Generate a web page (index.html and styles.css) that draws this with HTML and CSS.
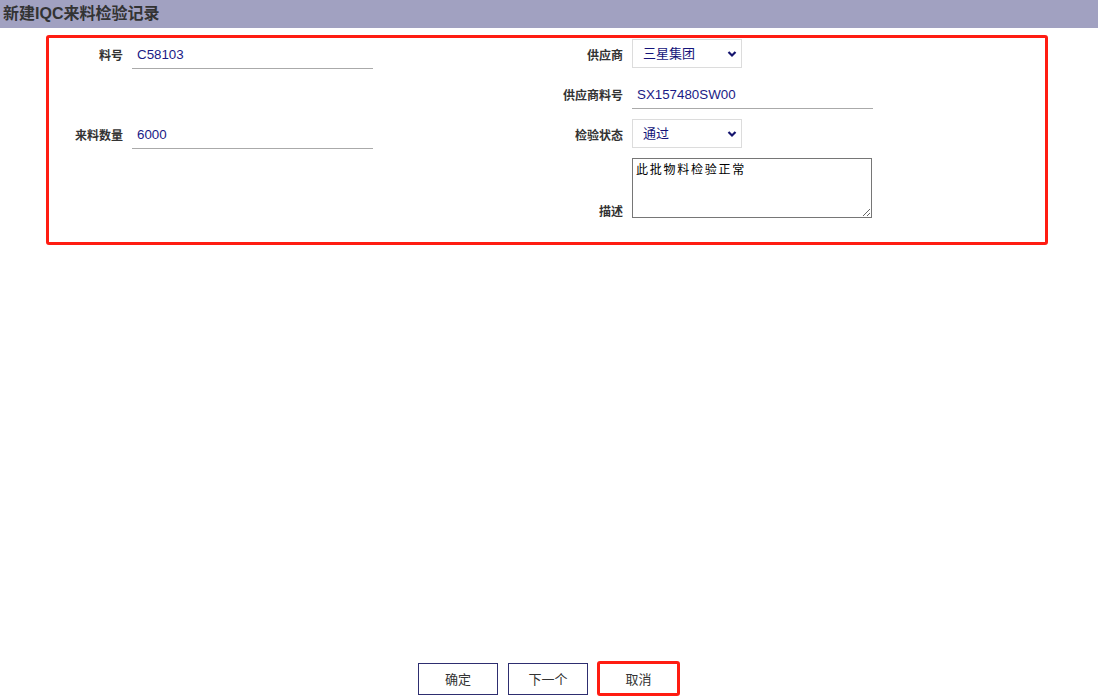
FILE: index.html
```html
<!DOCTYPE html>
<html lang="zh-CN">
<head>
<meta charset="utf-8">
<title>新建IQC来料检验记录</title>
<link rel="stylesheet" href="styles.css">
</head>
<body>
<div class="page">
  <header class="titlebar">新建IQC来料检验记录</header>
  <section class="formbox">
    <div class="grid">
      <div class="field f-l1">
        <label class="lbl">料号</label>
        <input class="txt" type="text" value="C58103">
      </div>
      <div class="field f-r1">
        <label class="lbl">供应商</label>
        <div class="selwrap">
          <select class="sel"><option>三星集团</option></select>
          <svg class="chev" width="10" height="8" viewBox="0 0 10 8"><path d="M1.5 2 L5 5.5 L8.5 2" fill="none" stroke="#14146e" stroke-width="2.2"/></svg>
        </div>
      </div>
      <div class="field f-r2">
        <label class="lbl">供应商料号</label>
        <input class="txt" type="text" value="SX157480SW00">
      </div>
      <div class="field f-l3">
        <label class="lbl">来料数量</label>
        <input class="txt" type="text" value="6000">
      </div>
      <div class="field f-r3">
        <label class="lbl">检验状态</label>
        <div class="selwrap">
          <select class="sel"><option>通过</option></select>
          <svg class="chev" width="10" height="8" viewBox="0 0 10 8"><path d="M1.5 2 L5 5.5 L8.5 2" fill="none" stroke="#14146e" stroke-width="2.2"/></svg>
        </div>
      </div>
      <div class="field f-r4">
        <label class="lbl lbl-bottom">描述</label>
        <textarea class="area">此批物料检验正常</textarea>
      </div>
    </div>
  </section>
  <div class="actions">
    <button class="btn">确定</button>
    <button class="btn">下一个</button>
    <button class="btn btn-hl">取消</button>
  </div>
</div>
</body>
</html>
```
FILE: styles.css
```css
* { box-sizing: border-box; }
html, body { margin: 0; padding: 0; background: #fff; }
body { font-family: Arial, "Liberation Sans", "Noto Sans CJK SC", sans-serif; }
.page { display: flex; flex-direction: column; height: 698px; }
.titlebar {
  height: 28px;
  background: #a1a1c1;
  color: #333;
  font-weight: bold;
  font-size: 16px;
  line-height: 28px;
  padding-left: 3px;
  font-family: Arial, "Liberation Sans", "Noto Sans CJK SC", sans-serif;
}
.formbox {
  margin: 7px 0 0 46px;
  width: 1002px;
  height: 210px;
  border: 3px solid #ff1c12;
  border-radius: 3px;
  padding-top: 1px;
}
.grid {
  display: grid;
  grid-template-columns: 500px 500px;
  grid-template-rows: 30px 30px 30px 60px;
  row-gap: 10px;
}
.field { display: flex; align-items: center; }
.f-l1 { grid-column: 1; grid-row: 1; }
.f-r1 { grid-column: 2; grid-row: 1; }
.f-r2 { grid-column: 2; grid-row: 2; }
.f-l3 { grid-column: 1; grid-row: 3; }
.f-r3 { grid-column: 2; grid-row: 3; }
.f-r4 { grid-column: 2; grid-row: 4; align-items: stretch; }
.lbl {
  width: 74px;
  margin-right: 9px;
  text-align: right;
  font-size: 12px;
  font-weight: bold;
  color: #333;
}
.lbl-bottom { align-self: flex-end; line-height: 14px; }
.txt {
  width: 241px;
  height: 30px;
  border: none;
  border-bottom: 1px solid #aaa;
  padding: 1px 5px 0;
  font-family: Arial, "Liberation Sans", "Noto Sans CJK SC", sans-serif;
  font-size: 13.333px;
  color: #1a1a86;
  outline: none;
  background: #fff;
}
.selwrap { position: relative; width: 110px; height: 29px; margin-top: -1px; }
.sel {
  appearance: none;
  -webkit-appearance: none;
  width: 110px;
  height: 29px;
  border: 1px solid #dcdcdc;
  background: #fff;
  padding: 0 0 0 10px;
  font-family: Arial, "Liberation Sans", "Noto Sans CJK SC", sans-serif;
  font-size: 13px;
  color: #14147a;
}
.chev { position: absolute; right: 5px; top: 11px; pointer-events: none; }
.area {
  width: 240px;
  height: 60px;
  margin-top: -1px;
  border: 1px solid #767676;
  padding: 2px 3px;
  font-family: "Noto Sans CJK SC", sans-serif;
  font-size: 12px;
  letter-spacing: 1.75px;
  line-height: 16px;
  color: #000;
  resize: both;
}
.actions {
  margin-top: auto;
  display: flex;
  justify-content: center;
  align-items: center;
  gap: 10px;
  padding-bottom: 2px;
  height: 37px;
}
.btn {
  width: 80px;
  height: 32px;
  border: 1px solid #2e2e70;
  background: #fff;
  color: #333;
  font-family: Arial, "Liberation Sans", "Noto Sans CJK SC", sans-serif;
  font-size: 13px;
  padding: 0;
}
.btn-hl {
  width: 83px;
  height: 35px;
  margin-left: -1px;
  border: 3px solid #ff1c12;
  border-radius: 3px;
}
```
